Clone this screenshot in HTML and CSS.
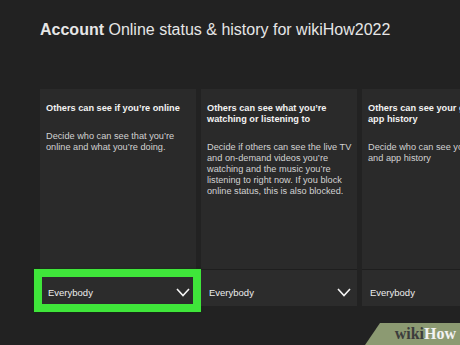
FILE: index.html
```html
<!DOCTYPE html>
<html lang="en">
<head>
    <meta charset="UTF-8">
    <meta name="viewport" content="width=device-width, initial-scale=1.0">
    <title>Online status &amp; history</title>
    <link rel="stylesheet" href="styles.css">
</head>
<body>
    <header class="page-title">
        <b>Account</b> Online status &amp; history for wikiHow2022
    </header>

    <div class="cards">
        <div class="card">
            <div class="card-body">
                <h2>Others can see if you’re online</h2>
                <p>Decide who can see that you’re online and what you’re doing.</p>
            </div>
            <div class="dropdown">
                <span>Everybody</span>
                <svg class="chevron" width="14" height="9" viewBox="0 0 14 9"><polyline points="1,1 7,7.5 13,1" /></svg>
                <div class="highlight"></div>
            </div>
        </div>
        <div class="card">
            <div class="card-body">
                <h2>Others can see what you’re watching or listening to</h2>
                <p>Decide if others can see the live TV and on-demand videos you’re watching and the music you’re listening to right now. If you block online status, this is also blocked.</p>
            </div>
            <div class="dropdown">
                <span>Everybody</span>
                <svg class="chevron" width="14" height="9" viewBox="0 0 14 9"><polyline points="1,1 7,7.5 13,1" /></svg>
            </div>
        </div>
        <div class="card">
            <div class="card-body">
                <h2>Others can see your game and app history</h2>
                <p>Decide who can see your games and app history</p>
            </div>
            <div class="dropdown">
                <span>Everybody</span>
                <svg class="chevron" width="14" height="9" viewBox="0 0 14 9"><polyline points="1,1 7,7.5 13,1" /></svg>
            </div>
        </div>
    </div>

    <div class="watermark"><span class="wiki">wiki</span><span class="how">How</span></div>
</body>
</html>
```

FILE: styles.css
```css
html, body {
    margin: 0;
    width: 460px;
    height: 345px;
    overflow: hidden;
}

body {
    position: relative;
    background: #222222;
    font-family: "Liberation Sans", Arial, sans-serif;
    color: #e8e8e8;
}

.page-title {
    padding: 20px 0 0 40px;
    font-size: 16px;
    line-height: 19px;
    white-space: nowrap;
    color: #e6e6e6;
}

.page-title b {
    font-weight: bold;
}

.cards {
    display: flex;
    gap: 5px;
    margin: 50px 0 0 40px;
}

.card {
    flex: 0 0 156px;
    height: 217px;
    display: flex;
    flex-direction: column;
    background: #2a2a2a;
}

.card-body {
    flex: 1;
    padding: 14px 4px 0 6px;
}

.card h2 {
    margin: 0;
    font-size: 9.2px;
    line-height: 11px;
    font-weight: bold;
    color: #f2f2f2;
}

.card p {
    margin: 17px 0 0 0;
    font-size: 9.2px;
    line-height: 11px;
    color: #d2d2d2;
}

.dropdown {
    position: relative;
    height: 37px;
    box-sizing: border-box;
    padding: 8px 6px 0 8px;
    display: flex;
    align-items: center;
    justify-content: space-between;
    border-top: 1px solid #1e1e1e;
    background: #2c2c2c;
    font-size: 9.5px;
    color: #ececec;
}

.chevron {
    fill: none;
    stroke: #f4f4f4;
    stroke-width: 1.6;
}

.highlight {
    position: absolute;
    left: -6px;
    top: -1px;
    width: 167px;
    height: 43px;
    box-sizing: border-box;
    border: 8px solid #3fe63a;
    box-shadow: 0 0 2px #0a3a08;
}

.watermark {
    position: absolute;
    right: 0;
    bottom: 0;
    width: 95px;
    height: 22px;
    box-sizing: border-box;
    padding: 2px 4px 0 0;
    text-align: right;
    background: #8c9a72;
    clip-path: polygon(15px 0, 100% 0, 100% 100%, 0 100%);
    font-family: "Liberation Serif", "Times New Roman", serif;
    font-weight: bold;
    font-size: 16px;
    line-height: 18px;
}

.watermark .wiki {
    color: #3c3c3c;
}

.watermark .how {
    color: #f2f2f2;
}
```
